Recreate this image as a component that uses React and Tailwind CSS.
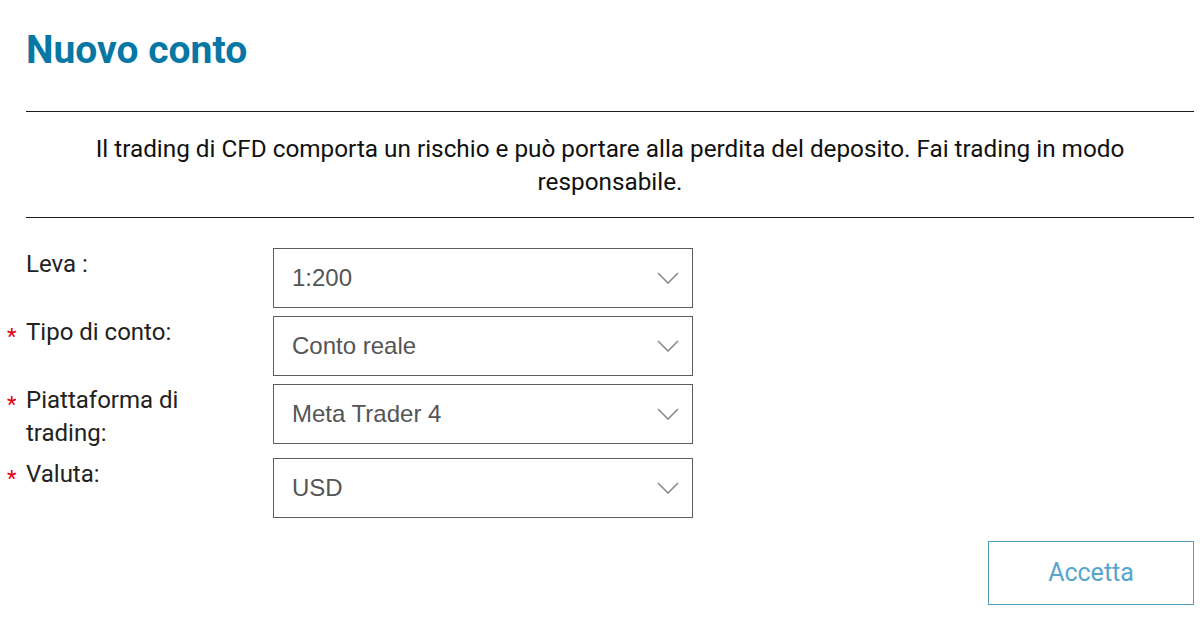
import React, { useState } from 'react';

function Chevron() {
    return (
        <svg width="22" height="12" viewBox="0 0 22 12" fill="none" className="shrink-0">
            <path d="M1 1l10 10 10-10" stroke="#8a8a8a" strokeWidth="1.6" />
        </svg>
    );
}

function SelectBox({ value }) {
    return (
        <button
            type="button"
            className="flex items-center justify-between w-[420px] h-[60px] border border-[#5e5e5e] bg-white pl-[18px] pr-[13px] text-left"
        >
            <span className="font-['Liberation_Sans',Arial,sans-serif] text-[24px] text-[#555555]">{value}</span>
            <Chevron />
        </button>
    );
}

function FormRow({ label, value, required }) {
    return (
        <div className="flex items-start">
            <div className="w-[26px] shrink-0 pl-[7px] text-[22px] leading-[33px] text-[#e3000b] pt-[4px]">
                {required ? '*' : ''}
            </div>
            <div className="w-[247px] shrink-0 pr-[50px] text-[24px] leading-[33px] text-[#222222]">
                {label}
            </div>
            <SelectBox value={value} />
        </div>
    );
}

export default function App() {
    const [rows] = useState([
        { label: 'Leva :', value: '1:200', required: false },
        { label: 'Tipo di conto:', value: 'Conto reale', required: true },
        { label: 'Piattaforma di trading:', value: 'Meta Trader 4', required: true },
        { label: 'Valuta:', value: 'USD', required: true },
    ]);

    return (
        <div className="w-[1204px] h-[621px] bg-white font-['Roboto',sans-serif] overflow-hidden">
            <h1 className="pl-[26px] pt-[27px] text-[39px] leading-[46px] font-bold text-[#0778a4]">
                Nuovo conto
            </h1>

            <div className="ml-[26px] mr-[10px] mt-[38px] border-t border-b border-[#1a1a1a] pt-[20px] pb-[19px] px-[50px]">
                <p className="text-center text-[24.3px] leading-[33px] text-[#111111]">
                    Il trading di CFD comporta un rischio e può portare alla perdita del deposito. Fai trading in modo responsabile.
                </p>
            </div>

            <div className="mt-[30px] flex flex-col gap-[8px]">
                {rows.map((r) => (
                    <FormRow key={r.label} {...r} />
                ))}
            </div>

            <div className="flex justify-end pr-[10px] mt-[23px]">
                <button
                    type="button"
                    className="w-[206px] h-[64px] border border-[#4f9dbb] text-[25px] text-[#55a5cc] bg-white"
                >
                    Accetta
                </button>
            </div>
        </div>
    );
}
